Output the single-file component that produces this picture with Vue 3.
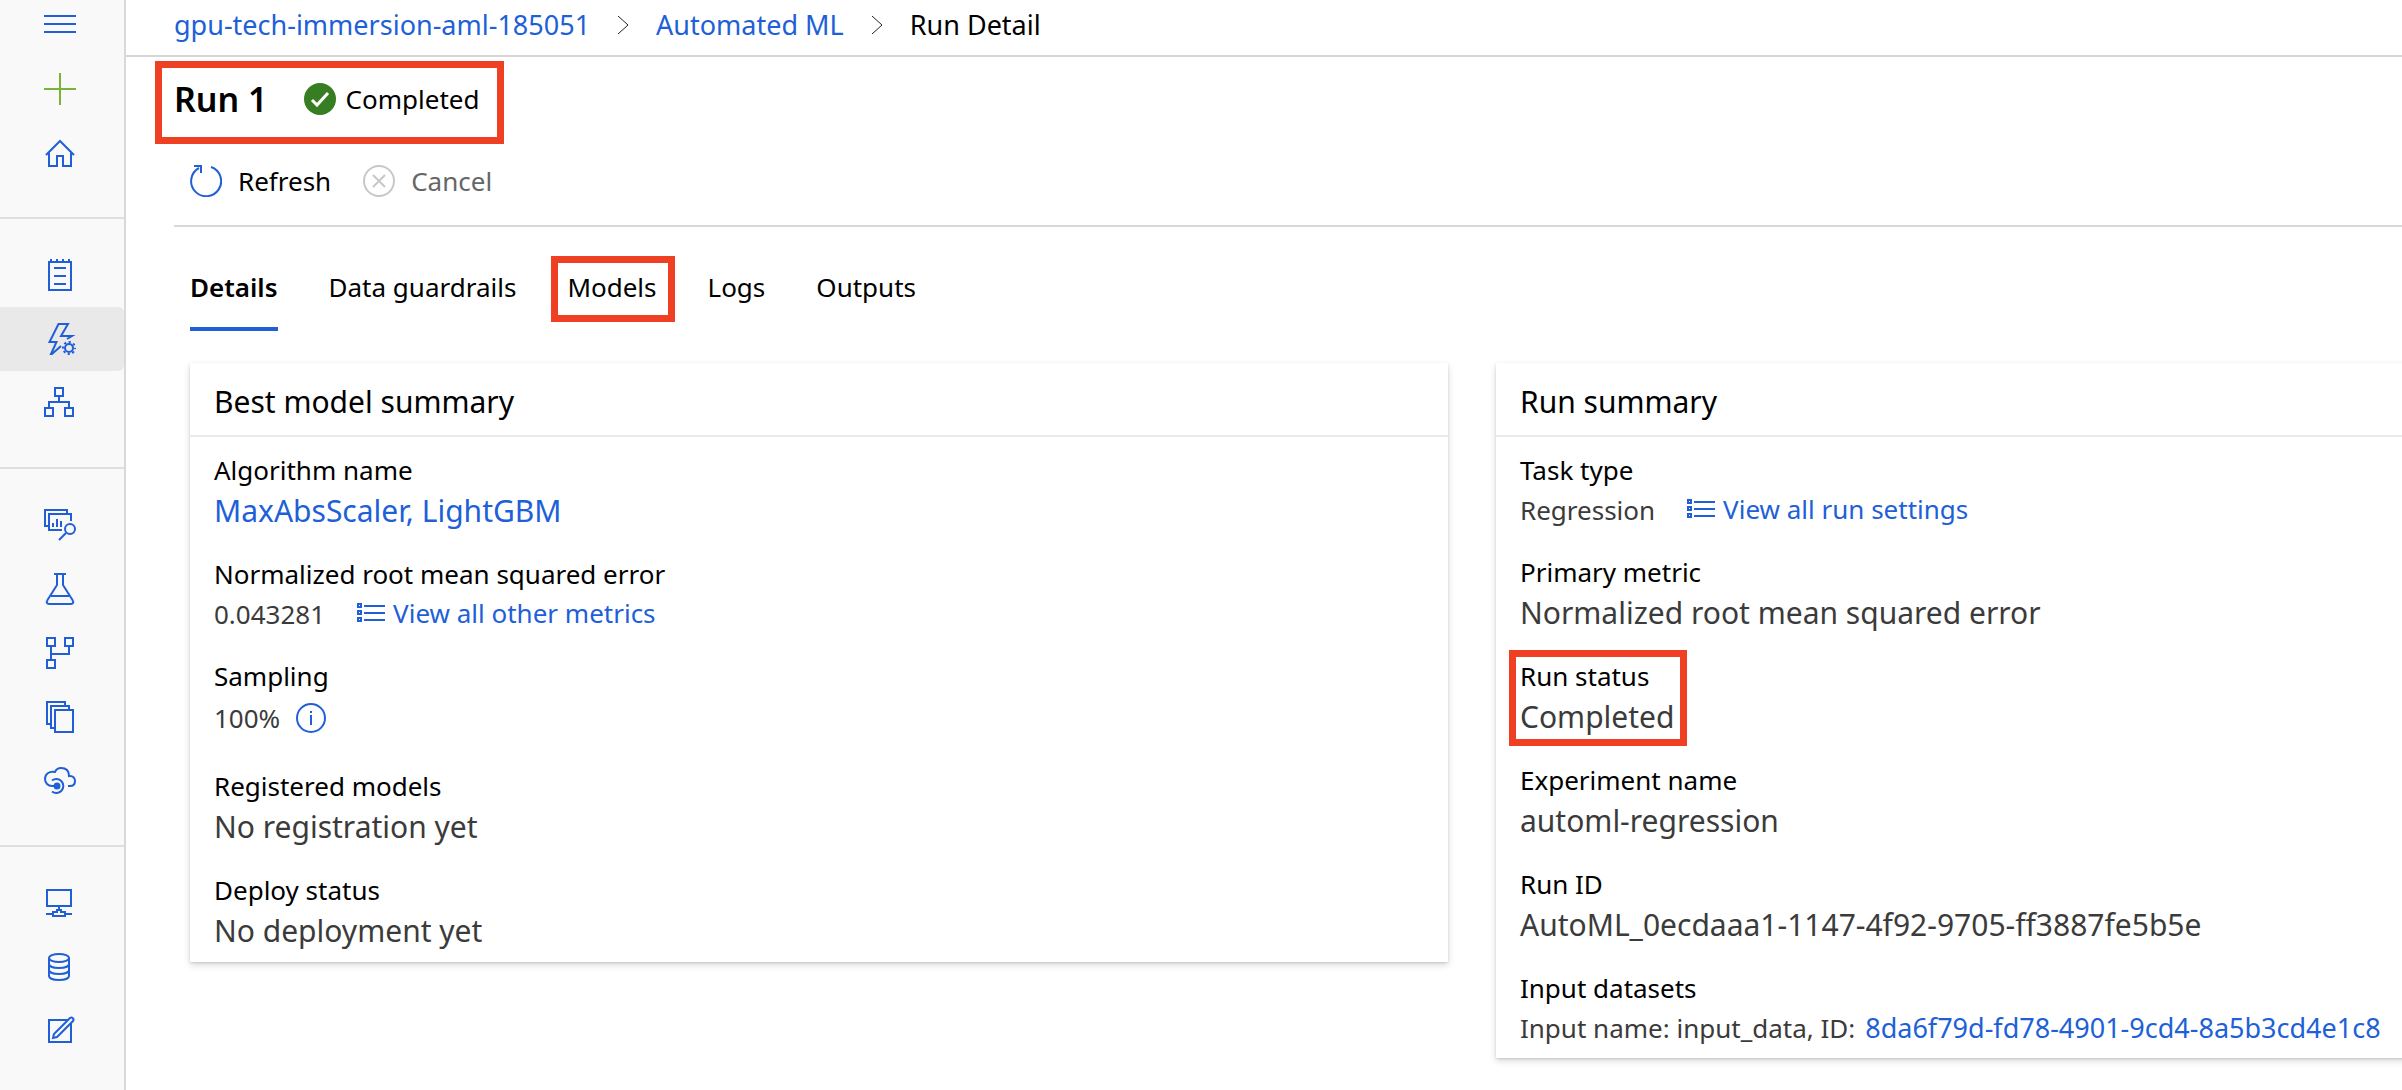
<script setup>
const navGroups = [
  [
    { name: 'Menu', icon: 'menu' },
    { name: 'New', icon: 'plus' },
    { name: 'Home', icon: 'home' }
  ],
  [
    { name: 'Notebooks', icon: 'notebook' },
    { name: 'Automated ML', icon: 'automl', active: true },
    { name: 'Designer', icon: 'designer' }
  ],
  [
    { name: 'Datasets', icon: 'datasets' },
    { name: 'Experiments', icon: 'flask' },
    { name: 'Pipelines', icon: 'pipeline' },
    { name: 'Models', icon: 'models' },
    { name: 'Endpoints', icon: 'endpoint' }
  ],
  [
    { name: 'Compute', icon: 'compute' },
    { name: 'Datastores', icon: 'datastore' },
    { name: 'Data labeling', icon: 'labeling' }
  ]
]

const icons = {
  menu: '<path d="M0 8H32M0 16H32M0 24H32"/>',
  plus: '<path d="M0 16H32M16 0V32"/>',
  home: '<path d="M2 18L16 4L30 18M5 16V29H13V19H19V29H27V16"/>',
  notebook: '<path d="M5 3H27V31H5ZM7 0V3M13 0V3M19 0V3M25 0V3M10 9H22M10 17H22M10 25H22"/>',
  automl:
    '<path d="M23 16L28 13H17L24 1H14.500L5.500 19H12.500L7 31H8L17 23"/><circle cx="25" cy="25" r="4"/><circle cx="25" cy="25" r="6" stroke-dasharray="2.200 2.512" stroke-dashoffset="1.100"/>',
  designer: '<path d="M11 1H19V9H11ZM1 21H9V29H1ZM21 21H29V29H21ZM15 10V15M5 20V15H25V20"/>',
  datasets:
    '<path d="M4 17H1V1H23V4M27 12V5H5V21H18M9 14V18M13 10V18M17 12V18M22 24L15 31"/><circle cx="26" cy="20" r="5"/>',
  flask:
    '<path d="M10 1H22M13 1V12L3.500 27C2 29.500 3 31 5 31H27C29 31 30 29.500 28.500 27L19 12V1M7 23H25"/>',
  pipeline: '<path d="M3 1H11V9H3ZM21 1H29V9H21ZM3 23H11V31H3ZM7 10V22M7 17H25V10"/>',
  models: '<path d="M6 23H3V1H21V5M10 27H7V5H25V9M11 9H29V31H11Z"/>',
  endpoint:
    '<path d="M13 21H8C4 21 1 18 1 14C1 9 5 6 11 7C12 4.500 14.500 3 17 3C22 3 25 6 25 11C29 10.500 31 13 31 16C31 19 29 21 26 21H24M8 15.500A7 7 0 1 1 8 26.500"/><circle cx="13" cy="21" r="2.500" fill="currentColor"/>',
  compute: '<path d="M3 3H27V19H3ZM15 19V23M9 25H13V23H17V25H21V29H9ZM2 27H8M22 27H28"/>',
  datastore:
    '<ellipse cx="15" cy="7" rx="10" ry="4"/><path d="M5 7V25C5 30.300 25 30.300 25 25V7M5 13C5 18.300 25 18.300 25 13M5 19C5 24.300 25 24.300 25 19"/>',
  labeling:
    '<path d="M5 5H27V27H5Z"/><path d="M9 23L10 19L26 3C28 1.500 30.500 4 29 6L13 22Z" fill="#f9f9f9"/>'
}

const tabs = [
  { name: 'Details', active: true },
  { name: 'Data guardrails' },
  { name: 'Models', marked: true },
  { name: 'Logs' },
  { name: 'Outputs' }
]

const cards = [
  {
    title: 'Best model summary',
    items: [
      { label: 'Algorithm name', link: 'MaxAbsScaler, LightGBM' },
      {
        label: 'Normalized root mean squared error',
        value: '0.043281',
        small: true,
        action: 'View all other metrics'
      },
      { label: 'Sampling', value: '100%', info: true },
      { label: 'Registered models', value: 'No registration yet' },
      { label: 'Deploy status', value: 'No deployment yet' }
    ]
  },
  {
    title: 'Run summary',
    items: [
      { label: 'Task type', value: 'Regression', small: true, action: 'View all run settings' },
      { label: 'Primary metric', value: 'Normalized root mean squared error' },
      { label: 'Run status', value: 'Completed', marked: true },
      { label: 'Experiment name', value: 'automl-regression' },
      { label: 'Run ID', value: 'AutoML_0ecdaaa1-1147-4f92-9705-ff3887fe5b5e' },
      {
        label: 'Input datasets',
        value: 'Input name: input_data, ID:',
        small: true,
        link: '8da6f79d-fd78-4901-9cd4-8a5b3cd4e1c8'
      }
    ]
  }
]
</script>

<template>
  <div class="page">
    <nav class="sidebar" aria-label="Workspace">
      <div v-for="(group, g) in navGroups" :key="g" class="nav-group">
        <a
          v-for="item in group"
          :key="item.icon"
          href="#"
          class="nav-item"
          :class="[item.icon, { active: item.active }]"
          :aria-label="item.name"
        >
          <svg class="nav-icon" viewBox="0 0 32 32" v-html="icons[item.icon]"></svg>
        </a>
      </div>
    </nav>

    <main class="main">
      <nav class="breadcrumb" aria-label="Breadcrumb">
        <a href="#">gpu-tech-immersion-aml-185051</a>
        <svg class="chevron" viewBox="0 0 12 20"><path d="M1 1L11 10L1 19" /></svg>
        <a href="#">Automated ML</a>
        <svg class="chevron" viewBox="0 0 12 20"><path d="M1 1L11 10L1 19" /></svg>
        <span>Run Detail</span>
      </nav>

      <header class="run-header">
        <div class="run-title marked">
          <h1>Run 1</h1>
          <svg class="check" viewBox="0 0 32 32">
            <circle cx="16" cy="16" r="16" />
            <path d="M8 17L13 22L24 10" />
          </svg>
          <span>Completed</span>
        </div>
      </header>

      <div class="toolbar">
        <button type="button" class="tool">
          <svg class="tool-icon refresh" viewBox="0 0 32 32">
            <path d="M9 3A15 15 0 1 0 21 2M4 1H11V8" />
          </svg>
          Refresh
        </button>
        <button type="button" class="tool" disabled>
          <svg class="tool-icon" viewBox="0 0 32 32">
            <circle cx="16" cy="16" r="15" />
            <path d="M10 10L22 22M22 10L10 22" />
          </svg>
          Cancel
        </button>
      </div>

      <div class="tabs" role="tablist">
        <button
          v-for="tab in tabs"
          :key="tab.name"
          type="button"
          role="tab"
          class="tab"
          :class="{ active: tab.active, marked: tab.marked }"
          :aria-selected="!!tab.active"
        >
          {{ tab.name }}
        </button>
      </div>

      <div class="cards">
        <section v-for="card in cards" :key="card.title" class="card">
          <h2>{{ card.title }}</h2>
          <dl>
            <div
              v-for="item in card.items"
              :key="item.label"
              class="item"
              :class="{ marked: item.marked, small: item.small, sampled: item.info }"
            >
              <dt>{{ item.label }}</dt>
              <dd>
                <span v-if="item.value">{{ item.value }}</span>
                <a v-if="item.link" href="#" class="link">{{ item.link }}</a>
                <a v-if="item.action" href="#" class="action">
                  <svg class="list-icon" viewBox="0 0 28 20">
                    <path d="M1 1H4V4H1ZM1 8H4V11H1ZM1 15H4V18H1ZM7 3H28M7 10H28M7 17H28" />
                  </svg>
                  {{ item.action }}
                </a>
                <svg v-if="item.info" class="info" viewBox="0 0 30 30">
                  <circle cx="15" cy="15" r="14" />
                  <path d="M15 12V22M15 8V10" />
                </svg>
              </dd>
            </div>
          </dl>
        </section>
      </div>
    </main>
  </div>
</template>

<style>
body {
  margin: 0;
  background: #fff;
}
</style>

<style scoped>
.page {
  display: flex;
  min-height: 100vh;
  font-family: "Noto Sans", "Open Sans", sans-serif;
  font-size: 26px;
  line-height: 38px;
  color: #000;
}

a {
  color: #215fd8;
  text-decoration: none;
}

button {
  padding: 0;
  border: 0;
  background: none;
  font: inherit;
  color: inherit;
}

svg {
  flex: none;
  fill: none;
  stroke: currentColor;
  stroke-width: 2;
}

/* Sidebar */
.sidebar {
  flex: none;
  box-sizing: border-box;
  width: 126px;
  border-right: 2px solid #d9d9d9;
  background: #f9f9f9;
}

.nav-group {
  padding: 24px 0 32px;
  border-bottom: 2px solid #dfdfdf;
}

.nav-group:first-child {
  padding-top: 0;
}

.nav-group:last-child {
  padding-bottom: 0;
  border-bottom: 0;
}

.nav-item {
  display: flex;
  align-items: center;
  height: 64px;
  padding-left: 44px;
  border-radius: 0 6px 6px 0;
}

.nav-item.menu {
  height: 48px;
  padding-bottom: 9px;
}

.nav-item.plus {
  color: #7cb23a;
}

.nav-item.active {
  background: #e9e9e9;
}

.nav-icon {
  width: 32px;
  height: 32px;
}

/* Highlight frame drawn around a block */
.marked {
  position: relative;
}

.marked::after {
  content: "";
  position: absolute;
  border: 7px solid #ef4023;
  pointer-events: none;
}

/* Header */
.main {
  flex: 1;
  min-width: 0;
  overflow: hidden;
}

.breadcrumb {
  display: flex;
  align-items: center;
  gap: 27px;
  height: 50px;
  padding: 0 48px 5px;
  border-bottom: 2px solid #d6d6d6;
  font-size: 27px;
}

.chevron {
  width: 12px;
  height: 20px;
  stroke-width: 1;
  color: #222;
}

.run-header {
  display: flex;
  padding: 17px 48px 0;
}

.run-title {
  display: flex;
  align-items: center;
  height: 50px;
}

.run-title::after {
  inset: -13px -25px -20px -19px;
}

h1 {
  margin: 0 36px 0 0;
  font-size: 34px;
  font-weight: 600;
}

.check {
  width: 32px;
  height: 32px;
  margin-right: 10px;
}

.check circle {
  fill: #377d22;
  stroke: none;
}

.check path {
  stroke: #fff;
  stroke-width: 3;
}

.toolbar {
  display: flex;
  gap: 32px;
  margin-left: 48px;
  padding: 38px 16px 25px;
  border-bottom: 2px solid #d9d9d9;
}

.tool {
  display: flex;
  align-items: center;
  gap: 16px;
}

.tool:disabled {
  color: #666;
}

.tool-icon {
  width: 32px;
  height: 32px;
  color: #c8c8c8;
}

.tool-icon.refresh {
  color: #215fd8;
}

.tabs {
  display: flex;
  gap: 51px;
  padding: 19px 64px 32px;
}

.tab {
  padding: 22px 0 21px;
  border-bottom: 4px solid transparent;
}

.tab.active {
  border-bottom-color: #215fd8;
  font-weight: 600;
}

.tab.marked::after {
  inset: 10px -18px 5px -16px;
}

/* Cards */
.cards {
  display: flex;
  align-items: flex-start;
  gap: 48px;
  padding: 0 5px 0 64px;
}

.card {
  flex: 0 0 57%;
  box-shadow: 0 3px 7px rgba(0, 0, 0, 0.15), 0 1px 2px rgba(0, 0, 0, 0.12);
}

h2 {
  margin: 0;
  padding: 20px 24px 14px;
  border-bottom: 2px solid #eaeaea;
  font-size: 30px;
  font-weight: 400;
}

dl {
  margin: 0;
  padding: 14px 24px 9px;
}

.item {
  width: fit-content;
  margin-bottom: 22px;
}

.item:last-child {
  margin-bottom: 0;
}

.item.marked::after {
  inset: -7px -13px -7px -11px;
}

dd {
  display: flex;
  align-items: center;
  height: 44px;
  margin: 0;
  font-size: 30px;
  color: #3b3b3b;
  white-space: nowrap;
}

.small dd {
  height: 42px;
  gap: 10px;
  font-size: 26px;
}

.small .link {
  font-size: 27px;
}

.sampled dd {
  height: 46px;
  gap: 16px;
  padding-bottom: 4px;
  font-size: 26px;
}

.action {
  display: flex;
  align-items: center;
  gap: 8px;
  margin-left: 22px;
  padding-bottom: 2px;
}

.list-icon {
  width: 28px;
  height: 20px;
}

.info {
  width: 30px;
  height: 30px;
  color: #215fd8;
}
</style>
